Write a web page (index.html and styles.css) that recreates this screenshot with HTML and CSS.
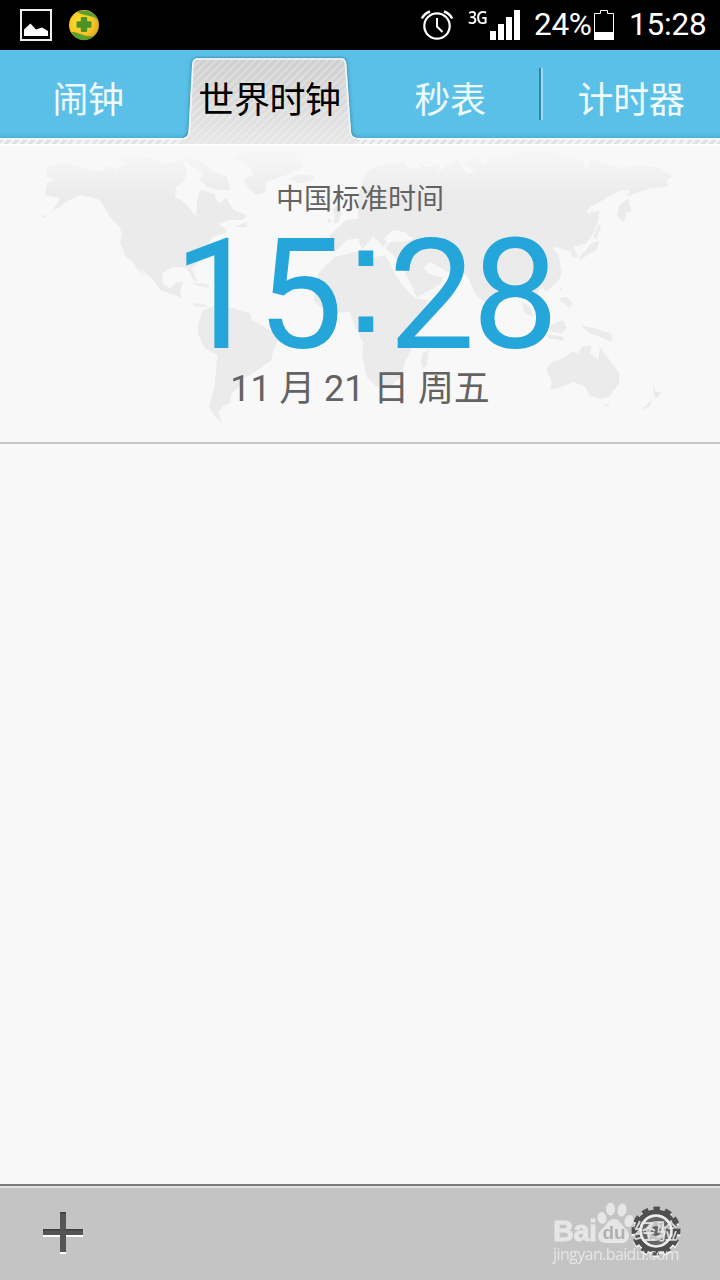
FILE: index.html
```html
<!DOCTYPE html>
<html lang="zh-CN">
  <head>
    <meta charset="UTF-8" />
    <title>世界时钟</title>
    <link rel="stylesheet" href="styles.css">
  </head>
  <body>

    <!-- Status bar -->
    <div class="statusbar">
      <svg class="icon-picture" width="34" height="34" viewBox="0 0 34 34">
        <rect x="2" y="2" width="30" height="30" fill="none" stroke="#eee" stroke-width="2" />
        <path d="M5 28V21.500L11.500 15.500L17 21.500L23 19.500L29 23V28Z" fill="#fff" />
      </svg>
      <svg class="icon-360" width="32" height="32" viewBox="0 0 32 32">
        <defs>
          <radialGradient id="ball" cx=".4" cy=".4" r=".65">
            <stop offset="0" stop-color="#ffe22e" />
            <stop offset=".65" stop-color="#f6c526" />
            <stop offset="1" stop-color="#d8a71d" />
          </radialGradient>
        </defs>
        <circle cx="16" cy="16" r="15" fill="url(#ball)" />
        <path d="M9 3C17-1 28 3 30.500 12C25 5 17 8 9 3Z" fill="#5d9e2c" />
        <path d="M3.500 23C10 22 17 29 26 27C18 34 8 32 3.500 23Z" fill="#5d9e2c" />
        <path d="M13.800 9h4.400v4.300h4.300v4.400h-4.300v4.300h-4.400v-4.300h-4.300v-4.400h4.300z" fill="#4c9327" stroke="#4c9327" stroke-width="2" stroke-linejoin="round" />
      </svg>
      <div class="status-right">
        <svg class="icon-alarm" width="34" height="34" viewBox="0 0 34 34" fill="none" stroke="#fff">
          <circle cx="17" cy="18" r="12.700" stroke-width="2.200" />
          <path d="M17 10V18.500L22.500 24" stroke-width="2" />
          <path d="M1.800 10.500Q4.500 5.500 10 3.500M32.200 10.500Q29.500 5.500 24 3.500" stroke-width="2.500" />
        </svg>
        <span class="network">3G</span>
        <svg class="icon-signal" width="30" height="30" viewBox="0 0 30 30" fill="#fff">
          <path d="M0 21h6v9H0zM8 14h6v16H8zM16 7h6v23h-6zM24 0h6v30h-6z" />
        </svg>
        <span class="percent">24%</span>
        <svg class="icon-battery" width="20" height="30" viewBox="0 0 20 30">
          <path d="M.500 3.500h6v-3h7v3h6v26H.500z" fill="none" stroke="#fff" />
          <path d="M0 22h20v8H0z" fill="#fff" />
        </svg>
        <span class="clock">15:28</span>
      </div>
    </div>

    <!-- Tabs -->
    <div class="tabs">
      <div class="tab">闹钟</div>
      <div class="tab active">
        <svg class="tab-shape" width="174" height="88" viewBox="0 0 174 88">
          <defs>
            <pattern id="stripes" width="5.600" height="5.600" patternUnits="userSpaceOnUse" patternTransform="rotate(45)">
              <rect width="5.600" height="5.600" fill="#d9d9d9" />
              <rect width="2.600" height="5.600" fill="#cdcdcd" />
            </pattern>
            <linearGradient id="fade" x1="0" y1="0" x2="0" y2="1">
              <stop offset="0" stop-color="#fff" stop-opacity="0" />
              <stop offset="1" stop-color="#fff" stop-opacity=".5" />
            </linearGradient>
          </defs>
          <path class="tab-shadow" d="M0 82Q5 82 5.500 75L9 8Q9.500 2 15 2H158Q163 2 163.500 8L168 75Q168.500 82 174 82V90H0Z" fill="url(#stripes)" />
          <path d="M0 82Q5 82 5.500 75L9 8Q9.500 2 15 2H158Q163 2 163.500 8L168 75Q168.500 82 174 82V90H0Z" fill="url(#fade)" />
          <path d="M1 82Q6 82 6.500 75L10 8Q10.500 3 15 3H158Q162 3 162.500 8L167 75Q167.500 82 173 82" fill="none" stroke="#f2f6f7" stroke-width="1.500" />
        </svg>
        <span>世界时钟</span>
      </div>
      <div class="tab">秒表</div>
      <div class="tab divided">计时器</div>
    </div>
    <div class="stripe"></div>

    <!-- Current zone -->
    <div class="zone">
      <svg class="map" width="720" height="298" viewBox="0 12 2160 894">
        <defs>
          <linearGradient id="land" gradientUnits="userSpaceOnUse" x1="0" y1="20" x2="0" y2="170">
            <stop offset="0" stop-color="#f8f8f8" />
            <stop offset="1" stop-color="#ebebeb" />
          </linearGradient>
        </defs>
        <g fill="url(#land)">
          <!-- North America -->
          <path d="M140 80L190 65L250 85L300 95L325 78L350 90L375 68L350 50L390 45L450 55L500 70L550 60L560 100L550 125L528 140L525 170L550 185L570 205L585 228L592 205L590 185L600 150L640 160L655 190L680 175L700 210L740 225L730 240L690 240L655 250L680 270L675 280L640 290L615 325L605 360L575 385L592 425L580 420L560 385L520 380L488 400L487 430L510 445L530 425L550 425L540 455L545 470L575 490L610 492L625 500L590 500L550 475L480 450L465 425L420 385L435 410L410 385L400 365L378 350L360 310L365 280L358 262L330 230L300 180L270 170L240 165L200 185L150 220L165 200L180 175L135 165L140 130L165 120L140 110Z" />
          <path d="M545 50L600 60L640 95L680 110L690 150L655 150L620 140L600 120L610 95L575 80Z" />
          <path d="M700 262L740 245L740 262ZM122 228L138 225L134 234ZM575 428L620 432L630 445L590 435Z" />
          <!-- Greenland, Iceland -->
          <path d="M695 50L760 30L850 25L925 35L900 60L910 80L860 105L800 125L795 155L770 165L750 150L730 120L760 105L740 70Z" />
          <path d="M865 118L895 102L945 108L935 122L900 130Z" />
          <!-- South America -->
          <path d="M610 510L650 495L700 505L750 520L755 540L820 575L838 595L820 630L815 660L785 680L760 700L730 715L725 735L695 760L690 790L665 800L655 820L666 847L640 825L628 800L635 770L645 730L652 645L615 625L593 580L595 550Z" />
          <!-- Africa -->
          <path d="M1005 350L1070 335L1110 355L1155 345L1170 370L1190 410L1215 445L1245 475L1285 480L1270 520L1230 575L1240 620L1215 665L1205 710L1170 740L1130 740L1100 710L1087 650L1090 610L1060 550L1050 515L980 522L940 480L955 400Z" />
          <path d="M1285 630L1267 640L1262 670L1270 686L1282 675Z" />
          <!-- Europe -->
          <path d="M985 305L990 285L1040 240L1075 235L1072 170L1085 130L1100 95L1140 75L1210 65L1225 85L1265 85L1250 60L1290 90L1350 400L1290 365L1270 385L1330 410L1325 430L1265 465L1250 470L1210 400L1185 350L1155 325L1180 295L1230 300L1220 280L1190 270L1150 320L1120 290L1085 330L1075 295L1040 300L1005 335Z" />
          <!-- Asia -->
          <path transform="translate(1080)" d="M180 90L240 70L235 95L270 70L290 60L320 100L345 95L310 70L355 50L370 75L390 50L450 40L510 25L560 30L640 45L670 65L675 90L690 75L685 60L740 70L790 85L830 75L890 80L940 110L920 120L925 140L870 145L800 170L810 150L780 152L750 168L685 205L680 220L718 213L715 240L700 280L680 310L640 320L655 350L640 355L630 335L590 320L578 328L595 345L605 390L600 415L560 455L545 440L530 460L550 490L540 515L500 480L480 460L450 440L420 450L400 500L385 490L350 470L320 405L260 390L200 350Z" />
          <path d="M1010 195L1025 218L1015 248L1002 250L1005 225L998 210ZM985 235L995 240L992 248L983 246Z" />
          <path d="M1860 195L1885 175L1895 212L1880 220L1872 246L1850 225Z" />
          <path d="M1795 252L1803 258L1790 298L1780 290ZM1775 310L1798 302L1790 330L1755 350L1738 365L1740 350Z" />
          <!-- South-east Asia -->
          <path d="M1675 475L1700 470L1718 490L1710 505L1690 490ZM1680 445L1688 443L1685 455ZM1565 485L1590 500L1600 530L1575 520ZM1645 560L1675 545L1690 540L1700 565L1685 580L1655 575ZM1640 583L1690 590L1690 602L1645 595ZM1740 555L1780 565L1835 580L1835 605L1800 590L1770 580Z" />
          <!-- Australia, New Zealand -->
          <path d="M1640 690L1650 670L1690 655L1715 635L1735 640L1745 620L1775 617L1770 640L1795 660L1800 620L1825 655L1858 700L1858 730L1825 772L1800 776L1770 768L1755 740L1720 725L1685 740L1650 750L1655 725Z" />
          <path d="M1810 792L1832 794L1823 800ZM1958 735L1968 755L1985 758L1970 775L1962 768ZM1958 780L1950 798L1925 811L1935 798Z" />
        </g>
        <!-- Inland seas -->
        <path d="M1152 295L1180 270L1240 295L1220 305L1160 305ZM1185 358L1195 360L1245 455L1235 450ZM1270 380L1290 378L1330 405L1320 412L1285 400Z" fill="#f8f8f8" />
      </svg>
      <div class="zone-name">中国标准时间</div>
      <div class="zone-time"><span>15</span><span class="colon">:</span><span>28</span></div>
      <div class="zone-date">11 月 21 日 周五</div>
    </div>

    <div class="content"></div>

    <!-- Toolbar -->
    <div class="toolbar">
      <svg class="icon-add" width="40" height="42" viewBox="0 0 40 42">
        <path d="M0 23h40v2H0zM17 40h6v2h-6z" fill="#fff" />
        <path d="M17 0h6v17h17v6H23v17h-6V23H0v-6h17z" fill="#555" />
        <path d="M17 0h6v1.500h-6zM0 17h17v1.500H0zM23 17h17v1.500H23z" fill="#3d3d3d" />
      </svg>
      <svg class="icon-gear" width="52" height="54" viewBox="-26 -26 52 54">
        <defs>
          <g id="gear">
            <circle r="18" fill="none" stroke="currentColor" stroke-width="7" />
            <circle r="22" fill="none" stroke="currentColor" stroke-width="5" stroke-dasharray="6.500 5.019" stroke-dashoffset="3.250" />
          </g>
        </defs>
        <use href="#gear" y="2" class="gear-light" />
        <use href="#gear" class="gear-dark" />
        <circle r="12" fill="none" stroke="#666" stroke-width="4" />
        <circle r="15.500" fill="none" stroke="#f0f0f0" stroke-width="2.500" />
        <circle r="5" fill="#666" />
      </svg>
      <div class="watermark">
        <div class="brand">
          <span>Bai</span>
          <svg class="paw" width="38" height="42" viewBox="0 0 38 42" fill="#ececec">
            <ellipse cx="6" cy="16" rx="4.500" ry="6" transform="rotate(-12 6 16)" />
            <ellipse cx="14.500" cy="7" rx="4.500" ry="6.500" />
            <ellipse cx="26" cy="8" rx="4.500" ry="6.500" transform="rotate(12 26 8)" />
            <ellipse cx="33" cy="19" rx="4.500" ry="6" transform="rotate(18 33 19)" />
            <path d="M18 17C24 17 24 22 29 26C36 32 33 41 26 41H10C1 41 0 32 6 27C11 23 12 17 18 17Z" />
            <text x="18" y="37" text-anchor="middle" class="du">du</text>
          </svg>
          <span class="jy">经验</span>
        </div>
        <div class="url">jingyan.baidu.com</div>
      </div>
    </div>
  </body>
</html>
```
FILE: styles.css
```css
* {
  box-sizing: border-box;
}

body {
  margin: 0;
  height: 1280px;
  display: flex;
  flex-direction: column;
  overflow: hidden;
  font-family: Roboto, "Noto Sans CJK SC", sans-serif;
  background-color: #f8f8f8;
}

svg {
  display: block;
  flex: none;
}

/* Status bar */
.statusbar {
  height: 50px;
  padding: 0 13px 0 19px;
  background-color: #000;
  color: #fff;
  display: flex;
  align-items: center;
  flex: none;
}

.icon-360 {
  margin-left: 15px;
}

.status-right {
  margin-left: auto;
  display: flex;
  align-items: center;
  font-size: 31.5px;
  line-height: 54px;
}

.icon-alarm {
  margin-right: 14px;
}

.network {
  width: 22px;
  font: 600 18px/18px "Open Sans", sans-serif;
  letter-spacing: -1px;
  margin-bottom: 16px;
  transform: scaleX(0.88);
  transform-origin: left;
}

.icon-signal {
  margin-right: 14px;
}

.percent {
  width: 60px;
  letter-spacing: -0.3px;
  white-space: nowrap;
}

.clock {
  width: 78px;
  margin-left: 15px;
  letter-spacing: -0.2px;
  white-space: nowrap;
}

/* Tabs */
.tabs {
  height: 88px;
  display: flex;
  flex: none;
  background: linear-gradient(#5bc0e7 94%, #4fb0d8);
}

.tab {
  width: 180px;
  position: relative;
  font-size: 36px;
  line-height: 102px;
  text-align: center;
  color: #effbff;
  letter-spacing: -0.4px;
}

.tab:first-child {
  padding-right: 4px;
}

.tab:last-child {
  padding-left: 2px;
}

.tab.active {
  color: #000;
  padding-right: 1px;
  z-index: 1;
}

.tab.active span {
  position: relative;
}

.tab-shape {
  position: absolute;
  left: 3px;
  top: 6px;
  overflow: hidden;
}

.tab-shadow {
  filter: drop-shadow(0 0 2px rgba(0, 70, 100, 0.5));
}

.tab.divided::before {
  content: "";
  position: absolute;
  left: -1px;
  top: 18px;
  width: 4px;
  height: 52px;
  background: linear-gradient(90deg, #3784a5 50%, #9bdcf4 50%);
}

.stripe {
  height: 6px;
  flex: none;
  border-top: 2px solid #f2f9fb;
  background: repeating-linear-gradient(135deg, #e0e0e0 0 2.6px, #f2f2f2 2.6px 5.6px);
}

/* Current zone */
.zone {
  height: 300px;
  flex: none;
  position: relative;
  border-top: 2px solid #fff;
  border-bottom: 2px solid #c6c6c6;
  text-align: center;
  color: #636363;
}

.map {
  position: absolute;
  left: 0;
  top: -2px;
}

.zone-name,
.zone-time,
.zone-date {
  position: relative;
}

.zone-name {
  padding-top: 34px;
  font-size: 28px;
  line-height: 40px;
}

.zone-time {
  height: 145px;
  display: flex;
  justify-content: center;
  padding-left: 9px;
  font-size: 154px;
  line-height: 151px;
  color: #24a6da;
  letter-spacing: -3px;
  white-space: nowrap;
}

.colon {
  width: 48px;
  font-family: "Liberation Sans", sans-serif;
  line-height: 119px;
}

.zone-date {
  font-size: 36px;
  line-height: 48px;
  letter-spacing: -0.1px;
}

.content {
  flex: 1;
}

/* Toolbar */
.toolbar {
  height: 96px;
  flex: none;
  position: relative;
  display: flex;
  justify-content: space-between;
  align-items: flex-start;
  padding: 26px 38px 0 43px;
  border-top: 2px solid #7b7b7b;
  background: linear-gradient(#e0e0e0 2px, #c4c4c4 2px);
}

.icon-gear {
  margin-top: -7px;
}

.gear-dark {
  color: #505050;
}

.gear-light {
  color: #f2f2f2;
}

/* Sits over the settings icon */
.watermark {
  position: absolute;
  left: 553px;
  top: 16px;
  color: #ececec;
  opacity: 0.85;
}

.brand {
  display: flex;
  align-items: flex-end;
  height: 42px;
  font: bold 29px/26px "Liberation Sans", sans-serif;
}

.brand span:first-child {
  width: 43px;
  letter-spacing: -0.5px;
  -webkit-text-stroke: 0.8px #ececec;
}

.du {
  font: bold 19px "Liberation Sans", sans-serif;
  fill: #adadad;
}

.jy {
  font: 500 22px/30px "Noto Sans CJK SC", sans-serif;
}

.url {
  font: 16px/20px "Open Sans", sans-serif;
  letter-spacing: -0.6px;
}
```
